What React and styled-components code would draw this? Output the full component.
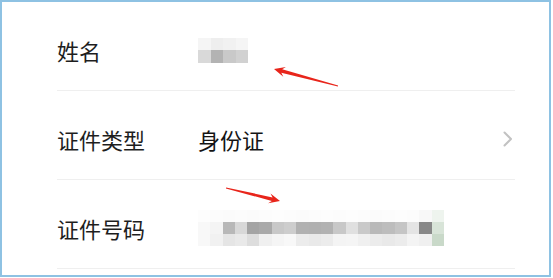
import React from "react";
import styled, { createGlobalStyle } from "styled-components";

const GlobalStyle = createGlobalStyle`
  html, body {
    margin: 0;
    padding: 0;
    background: #ffffff;
  }
  body {
    font-family: "Noto Sans CJK SC", "Noto Sans", sans-serif;
  }
`;

const Frame = styled.div`
  position: relative;
  width: 551px;
  height: 277px;
  box-sizing: border-box;
  border: 2px solid #8ec2e3;
  background: #ffffff;
  padding-left: 55px;
  padding-right: 34px;
  overflow: hidden;
`;

const Row = styled.div`
  display: flex;
  align-items: center;
  height: 80px;
  padding-top: 8px;
  border-bottom: 1px solid #efefef;
`;

const Label = styled.div`
  width: 141px;
  flex-shrink: 0;
  font-size: 22px;
  line-height: 30px;
  color: #1e1e1e;
`;

const Value = styled.div`
  flex: 1;
  font-size: 22px;
  line-height: 30px;
  color: #141414;
`;

const Mosaic = styled.div`
  display: grid;
  grid-template-columns: repeat(${(p) => p.$cols}, ${(p) => p.$cell}px);
  grid-auto-rows: ${(p) => p.$cell}px;
`;

const Cell = styled.div`
  background: ${(p) => p.$c};
`;

const Chevron = styled.svg`
  width: 10px;
  height: 16px;
  margin-right: 2px;
  flex-shrink: 0;
`;

const Annotations = styled.svg`
  position: absolute;
  left: -2px;
  top: -2px;
  width: 553px;
  height: 278px;
  pointer-events: none;
`;

const nameCells = [
  ["#f5f5f5", "#eeeeee", "#f1f1f1", "#f5f5f5"],
  ["#d9d9d9", "#b3b3b3", "#c9c9c9", "#d1d1d1"],
];

const idCells = [
  [
    "#fdfdfd", "#fcfcfc", "#fbfbfb", "#fcfcfc", "#fbfbfb", "#fcfcfc", "#fdfdfd",
    "#fcfcfc", "#fbfbfb", "#fcfcfc", "#fdfdfd", "#fcfcfc", "#fdfdfd", "#fcfcfc",
    "#fbfbfb", "#fcfcfc", "#fdfdfd", "#fcfcfc", "#f8f8f8", "#eef4ee",
  ],
  [
    "#f8f8f8", "#f4f4f4", "#b8b8b8", "#d8d8d8", "#a4a4a4", "#a9a9a9", "#c8c8c8",
    "#cdcdcd", "#b1b1b1", "#b0b0b0", "#b2b2b2", "#c8c8c8", "#e0e0e0", "#c9c9c9",
    "#b9b9b9", "#bdbdbd", "#c5c5c5", "#e4e4e4", "#888888", "#d8e4d8",
  ],
  [
    "#f8f8f8", "#f1f1f1", "#e5e5e5", "#e9e9e9", "#dddddd", "#f0f0f0", "#f5f5f5",
    "#f8f8f8", "#ececec", "#e9e9e9", "#ececec", "#f4f4f4", "#f5f5f5", "#f0f0f0",
    "#ececec", "#e9e9e9", "#ececec", "#f4f4f4", "#f0f0f0", "#c9d9c9",
  ],
];

// arrow polygon from tail (x1,y1) to tip (x2,y2)
const arrowPoints = (x1, y1, x2, y2) => {
  const dx = x2 - x1;
  const dy = y2 - y1;
  const len = Math.hypot(dx, dy);
  const ux = dx / len;
  const uy = dy / len;
  const nx = -uy;
  const ny = ux;
  const head = 11;
  const bx = x2 - ux * head;
  const by = y2 - uy * head;
  const nbx = x2 - ux * (head - 3);
  const nby = y2 - uy * (head - 3);
  const pts = [
    [x1 + nx * 0.5, y1 + ny * 0.5],
    [nbx + nx * 1.8, nby + ny * 1.8],
    [bx + nx * 5, by + ny * 5],
    [x2, y2],
    [bx - nx * 5, by - ny * 5],
    [nbx - nx * 1.8, nby - ny * 1.8],
    [x1 - nx * 0.5, y1 - ny * 0.5],
  ];
  return pts.map((p) => p.map((v) => v.toFixed(1)).join(",")).join(" ");
};

const renderMosaic = (rows, cell) => (
  <Mosaic $cols={rows[0].length} $cell={cell}>
    {rows.flat().map((c, i) => (
      <Cell key={i} $c={c} />
    ))}
  </Mosaic>
);

export default function App() {
  return (
    <>
      <GlobalStyle />
      <Frame>
        <Row>
          <Label>姓名</Label>
          <Value>{renderMosaic(nameCells, 12.5)}</Value>
        </Row>
        <Row>
          <Label>证件类型</Label>
          <Value>身份证</Value>
          <Chevron viewBox="0 0 10 16">
            <path
              d="M1.5 1.5 L8 8 L1.5 14.5"
              fill="none"
              stroke="#c2c2c2"
              strokeWidth="2"
              strokeLinecap="round"
              strokeLinejoin="round"
            />
          </Chevron>
        </Row>
        <Row>
          <Label>证件号码</Label>
          <Value>{renderMosaic(idCells, 12.3)}</Value>
        </Row>
        <Annotations viewBox="0 0 553 278">
          <polygon points={arrowPoints(338, 86, 274, 69)} fill="#e8251b" />
          <polygon points={arrowPoints(226, 188, 280, 201)} fill="#e8251b" />
        </Annotations>
      </Frame>
    </>
  );
}
